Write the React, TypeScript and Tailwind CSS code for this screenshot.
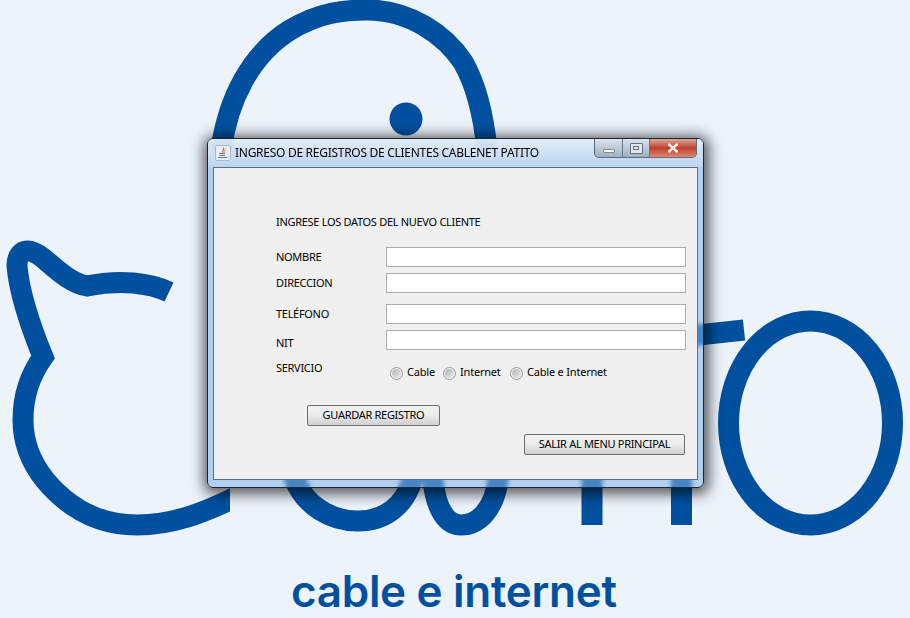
const BLUE = '#00509f';

function Logo() {
  return (
    <svg className="absolute inset-0" width="910" height="618" viewBox="0 0 910 618" fill="none">
      <defs>
        <clipPath id="cat">
          <rect x="0" y="200" width="230" height="340" />
        </clipPath>
      </defs>
      <g stroke={BLUE} strokeWidth="21">
        {/* cat ear and back */}
        <path
          clipPath="url(#cat)"
          d="M169 292 C150 283 120 279 87 286 C70 283 55 268 43 258 C33 250 27 250 23 252 C18 255 17 260 17 266 C19 290 30 325 43 357 C30 375 23 397 23 420 C23 445 33 465 45 480 C70 510 100 525 137 525 C170 525 200 515 240 495"
        />
        {/* head */}
        <path d="M221 150 C228 100 250 55 290 30 C320 12 345 10 367 10 C410 10 445 35 463 62 C478 88 484 120 487 150" />
        {/* bowls under the window */}
        <path d="M289 460 L295 480 C305 505 330 521 358 521 C385 521 405 505 412 480 L418 460" />
        <path d="M431 460 L433 480 C436 510 447 525 461 525 C478 525 494 510 498 480 L500 460" />
        {/* t bar */}
        <path d="M680 337 L744 330" />
        {/* big o */}
        <ellipse cx="810.5" cy="423" rx="82" ry="102" />
      </g>
      <circle cx="406" cy="119" r="16.5" fill={BLUE} />
      <rect x="581.5" y="440" width="21" height="85" fill={BLUE} />
      <rect x="671" y="440" width="21" height="85" fill={BLUE} />
    </svg>
  );
}

function JavaIcon() {
  return (
    <svg width="16" height="16" viewBox="0 0 16 16" fill="none">
      <rect x="0.5" y="0.5" width="15" height="15" rx="1.5" fill="#e6eef6" stroke="#a9bccf" />
      <path d="M8.5 2.5 C10 4.5 6.5 5.5 8 8" stroke="#d9622b" strokeWidth="1.2" />
      <path d="M10.5 4.5 C9.5 5.5 9 6.5 9.8 7.8" stroke="#e88a4a" strokeWidth="1" />
      <path d="M4 8.5 H10 M4.5 10.5 H10 M3 12.5 H12.5" stroke="#5a7f9f" strokeWidth="1.1" />
    </svg>
  );
}

function WindowControls() {
  return (
    <div className="flex h-[19px] overflow-hidden rounded-b-[5px] border border-t-0 border-[#5d6b7a] bg-gradient-to-b from-[#dbe4ee] via-[#bccad8] to-[#9db0c4]">
      <div className="flex w-[28px] items-end justify-center border-r border-[#6c7a88] pb-[4px]">
        <div className="h-[4px] w-[12px] rounded-[1px] border border-[#7f8f9f] bg-[#f4f6f8]" />
      </div>
      <div className="flex w-[27px] items-center justify-center border-r border-[#6c7a88]">
        <div className="flex h-[11px] w-[13px] items-center justify-center rounded-[1px] border border-[#66727f] bg-[#dfe6ed]">
          <div className="h-[4px] w-[6px] border border-[#66727f]" />
        </div>
      </div>
      <div className="flex w-[46px] items-center justify-center bg-gradient-to-b from-[#d8a79d] via-[#bf3d29] to-[#d98a70]">
        <svg width="12" height="10" viewBox="0 0 12 10">
          <path d="M1.5 1 L10.5 9 M10.5 1 L1.5 9" stroke="#f4ece8" strokeWidth="2.4" />
        </svg>
      </div>
    </div>
  );
}

function FieldRow({ label, className, labelClass }: { label: string; className: string; labelClass?: string }) {
  return (
    <div className={`flex h-[20px] items-center ${className}`}>
      <span className={`w-[110px] tracking-[-0.3px] ${labelClass ?? ''}`}>{label}</span>
      <div className="h-[20px] w-[300px] border border-[#ababab] bg-white" />
    </div>
  );
}

function Radio({ label, className }: { label: string; className: string }) {
  return (
    <div className={`flex items-center gap-[4px] ${className}`}>
      <div className="flex size-[13px] items-center justify-center rounded-full border border-[#989898] bg-[#f4f4f4]">
        <div className="size-[9px] rounded-full bg-gradient-to-br from-[#b0b0b0] to-[#ececec]" />
      </div>
      <span className="-mt-[2px] tracking-[-0.2px]">{label}</span>
    </div>
  );
}

function JavaButton({ label, className }: { label: string; className: string }) {
  return (
    <button className={`flex h-[21px] items-center justify-center rounded-[2px] border border-[#707070] bg-gradient-to-b from-[#f3f3f3] via-[#ebebeb] to-[#cfcfcf] tracking-[-0.3px] ${className}`}>
      {label}
    </button>
  );
}

export default function App() {
  return (
    <div className="relative h-[618px] w-[910px] overflow-hidden bg-[#edf3fb] font-['Noto_Sans',sans-serif] text-[11px] text-black">
      <Logo />

      <div className="absolute left-[291px] top-[561px] font-['Inter',sans-serif] text-[44px] leading-[60px] font-semibold tracking-[-0.3px] text-[#00509f]">
        cable e internet
      </div>

      {/* window */}
      <div className="absolute left-[207px] top-[138px] flex h-[350px] w-[497px] flex-col rounded-[6px] border border-[#1d2530] bg-[#7fb0e8]/55 px-[5px] pb-[7px] shadow-[1px_2px_14px_4px_rgba(0,0,0,0.65)] backdrop-blur-[2px]">
        <div className="-mx-[5px] flex h-[28px] items-start rounded-t-[5px] bg-gradient-to-b from-[#e8f0f8]/90 to-[#bcd6f1]/80 px-[5px]">
          <div className="mt-[6px] flex items-center gap-[4px] pl-[2px] text-[12px] leading-[16px] tracking-[-0.28px]">
            <JavaIcon />
            <span>INGRESO DE REGISTROS DE CLIENTES CABLENET PATITO</span>
          </div>
          <div className="mr-[1px] ml-auto">
            <WindowControls />
          </div>
        </div>

        <div className="flex-1 border border-[#5f6f82] bg-[#f0f0f0] pl-[62px]">
          <p className="mt-[46px] h-[16px] leading-[16px] tracking-[-0.3px]">INGRESE LOS DATOS DEL NUEVO CLIENTE</p>
          <FieldRow label="NOMBRE" className="mt-[17px]" />
          <FieldRow label="DIRECCION" className="mt-[6px]" />
          <FieldRow label="TELÉFONO" className="mt-[11px]" />
          <FieldRow label="NIT" className="mt-[6px]" labelClass="pt-[6px]" />

          <div className="mt-[10px] flex h-[20px]">
            <span className="h-[16px] w-[114px] leading-[16px] tracking-[-0.3px]">SERVICIO</span>
            <div className="mt-[5px] flex h-[16px] items-center">
              <Radio label="Cable" className="w-[53px]" />
              <Radio label="Internet" className="w-[67px]" />
              <Radio label="Cable e Internet" className="" />
            </div>
          </div>

          <JavaButton label="GUARDAR REGISTRO" className="mt-[25px] ml-[31px] w-[133px]" />
          <div className="mt-[8px] flex justify-end pr-[12px]">
            <JavaButton label="SALIR AL MENU PRINCIPAL" className="w-[161px]" />
          </div>
        </div>
      </div>
    </div>
  );
}
